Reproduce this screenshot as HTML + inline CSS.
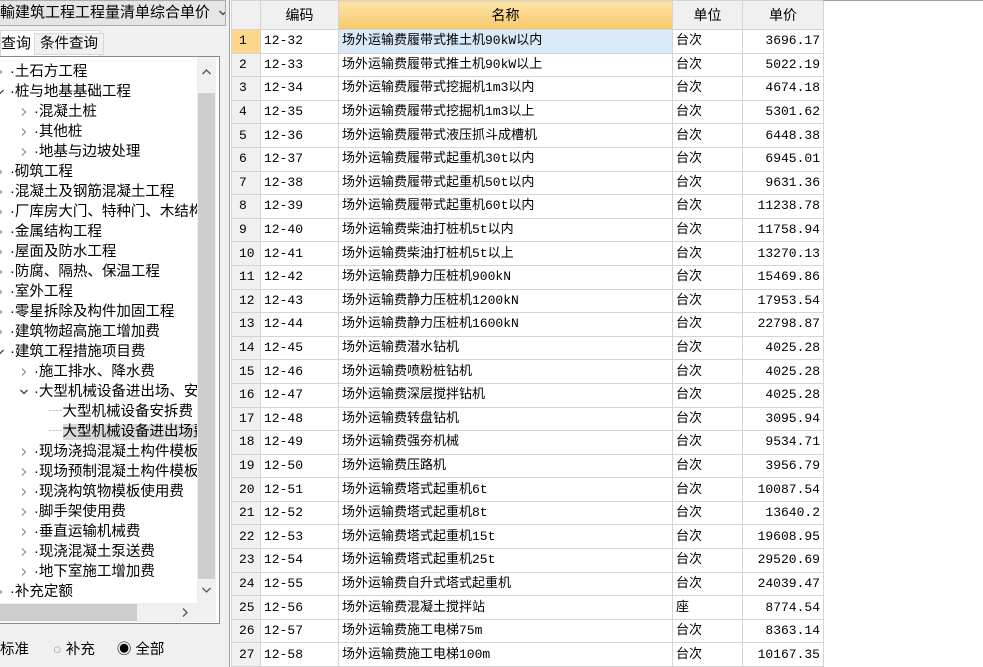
<!DOCTYPE html>
<html><head><meta charset="utf-8"><style>
*{margin:0;padding:0;box-sizing:border-box}
body{width:983px;height:667px;background:#f0f0f0;position:relative;overflow:hidden;font-family:"Liberation Sans","Noto Sans CJK SC",sans-serif;color:#000}
.abs{position:absolute}
#combo{left:0;top:0;width:226px;height:26px;background:#e5e5e5;border:1px solid #adadad;border-left:none;font-size:15px;line-height:24px;white-space:nowrap;overflow:hidden}
#tree{left:0;top:56px;width:220px;height:568px;background:#fff;border:1px solid #828790;border-left:none}
.ti{position:absolute;font-size:14.5px;line-height:20px;white-space:nowrap;height:20px}
.ar{display:inline-block;width:14px;height:20px;vertical-align:top}
.ar svg{margin-top:6px}
#grid{left:229px;top:0;width:754px;height:667px;background:#fff;border-left:1px solid #a0a0a0}
table{border-collapse:collapse;table-layout:fixed;font-family:"Liberation Mono","Noto Sans CJK SC",monospace;font-size:13px;position:absolute;left:1px;top:0}
tr{height:23.6px}
td{border:1px solid #d4d4d4;height:23.6px;line-height:16px;padding:0 3px;white-space:nowrap;overflow:hidden}
th{height:29px;font-weight:normal;background:#f0f0f0;border:1px solid #d4d4d4;font-family:"Liberation Sans","Noto Sans CJK SC",sans-serif;font-size:14px}
td.n{background:#f0f0f0;padding-left:7px}
td.r{text-align:right}
</style></head><body>
<svg width="0" height="0" style="position:absolute"><defs>
<symbol id="cr" viewBox="0 0 8 8"><path d="M2 0.5 L5.5 4 L2 7.5" fill="none" stroke="#999" stroke-width="1.3"/></symbol>
<symbol id="cd" viewBox="0 0 8 8"><path d="M0.5 2 L4 5.5 L7.5 2" fill="none" stroke="#444" stroke-width="1.3"/></symbol>
</defs></svg>
<div id="combo" class="abs">輸建筑工程工程量清单综合单价 <svg width="10" height="8" style="margin-left:4px"><use href="#cd"/></svg></div>
<div class="abs" style="left:0;top:30px;width:100px;height:27px;background:#fff;border:1px solid #d9d9d9;border-bottom:none;font-size:15px;line-height:26px">查询</div>
<div class="abs" style="left:34px;top:33px;width:70px;height:22px;background:#f0f0f0;border:1px solid #d9d9d9;font-size:14.5px;line-height:20px;padding-left:5px">条件查询</div>
<div id="tree" class="abs">
<div style="position:absolute;left:0;top:0;width:197px;height:546px;overflow:hidden">
<div class="ti" style="left:-4px;top:5px"><span class="ar"><svg width="8" height="8"><use href="#cr"/></svg></span>·土石方工程</div>
<div class="ti" style="left:-4px;top:25px"><span class="ar"><svg width="8" height="8"><use href="#cd"/></svg></span>·桩与地基基础工程</div>
<div class="ti" style="left:20px;top:45px"><span class="ar"><svg width="8" height="8"><use href="#cr"/></svg></span>·混凝土桩</div>
<div class="ti" style="left:20px;top:65px"><span class="ar"><svg width="8" height="8"><use href="#cr"/></svg></span>·其他桩</div>
<div class="ti" style="left:20px;top:85px"><span class="ar"><svg width="8" height="8"><use href="#cr"/></svg></span>·地基与边坡处理</div>
<div class="ti" style="left:-4px;top:105px"><span class="ar"><svg width="8" height="8"><use href="#cr"/></svg></span>·砌筑工程</div>
<div class="ti" style="left:-4px;top:125px"><span class="ar"><svg width="8" height="8"><use href="#cr"/></svg></span>·混凝土及钢筋混凝土工程</div>
<div class="ti" style="left:-4px;top:145px"><span class="ar"><svg width="8" height="8"><use href="#cr"/></svg></span>·厂库房大门、特种门、木结构工程</div>
<div class="ti" style="left:-4px;top:165px"><span class="ar"><svg width="8" height="8"><use href="#cr"/></svg></span>·金属结构工程</div>
<div class="ti" style="left:-4px;top:185px"><span class="ar"><svg width="8" height="8"><use href="#cr"/></svg></span>·屋面及防水工程</div>
<div class="ti" style="left:-4px;top:205px"><span class="ar"><svg width="8" height="8"><use href="#cr"/></svg></span>·防腐、隔热、保温工程</div>
<div class="ti" style="left:-4px;top:225px"><span class="ar"><svg width="8" height="8"><use href="#cr"/></svg></span>·室外工程</div>
<div class="ti" style="left:-4px;top:245px"><span class="ar"><svg width="8" height="8"><use href="#cr"/></svg></span>·零星拆除及构件加固工程</div>
<div class="ti" style="left:-4px;top:265px"><span class="ar"><svg width="8" height="8"><use href="#cr"/></svg></span>·建筑物超高施工增加费</div>
<div class="ti" style="left:-4px;top:285px"><span class="ar"><svg width="8" height="8"><use href="#cd"/></svg></span>·建筑工程措施项目费</div>
<div class="ti" style="left:20px;top:305px"><span class="ar"><svg width="8" height="8"><use href="#cr"/></svg></span>·施工排水、降水费</div>
<div class="ti" style="left:20px;top:325px"><span class="ar"><svg width="8" height="8"><use href="#cd"/></svg></span>·大型机械设备进出场、安拆费</div>
<div class="ti" style="left:48px;top:345px"><span style="color:#aaa">┈</span>大型机械设备安拆费</div>
<div class="ti" style="left:48px;top:365px"><span style="color:#aaa">┈</span><span style="background:#d9d9d9">大型机械设备进出场费</span></div>
<div class="ti" style="left:20px;top:385px"><span class="ar"><svg width="8" height="8"><use href="#cr"/></svg></span>·现场浇捣混凝土构件模板使用费</div>
<div class="ti" style="left:20px;top:405px"><span class="ar"><svg width="8" height="8"><use href="#cr"/></svg></span>·现场预制混凝土构件模板使用费</div>
<div class="ti" style="left:20px;top:425px"><span class="ar"><svg width="8" height="8"><use href="#cr"/></svg></span>·现浇构筑物模板使用费</div>
<div class="ti" style="left:20px;top:445px"><span class="ar"><svg width="8" height="8"><use href="#cr"/></svg></span>·脚手架使用费</div>
<div class="ti" style="left:20px;top:465px"><span class="ar"><svg width="8" height="8"><use href="#cr"/></svg></span>·垂直运输机械费</div>
<div class="ti" style="left:20px;top:485px"><span class="ar"><svg width="8" height="8"><use href="#cr"/></svg></span>·现浇混凝土泵送费</div>
<div class="ti" style="left:20px;top:505px"><span class="ar"><svg width="8" height="8"><use href="#cr"/></svg></span>·地下室施工增加费</div>
<div class="ti" style="left:-4px;top:525px"><span class="ar"><svg width="8" height="8"><use href="#cr"/></svg></span>·补充定额</div>
</div>
<div class="abs" style="left:197px;top:0;width:19px;height:546px;background:#f0f0f0">
<div class="abs" style="left:1px;top:36px;width:17px;height:486px;background:#cdcdcd"></div>
<svg class="abs" style="left:5px;top:12px" width="9" height="6"><path d="M0.5 5 L4.5 1 L8.5 5" fill="none" stroke="#555" stroke-width="1.3"/></svg>
<svg class="abs" style="left:5px;top:530px" width="9" height="6"><path d="M0.5 1 L4.5 5 L8.5 1" fill="none" stroke="#555" stroke-width="1.3"/></svg>
</div>
<div class="abs" style="left:0;top:546px;width:216px;height:19px;background:#f0f0f0">
<div class="abs" style="left:0;top:1px;width:137px;height:17px;background:#cdcdcd"></div>
<svg class="abs" style="left:182px;top:5px" width="6" height="9"><path d="M1 0.5 L5 4.5 L1 8.5" fill="none" stroke="#555" stroke-width="1.3"/></svg>
</div>
</div>
<div class="abs" style="left:0;top:638px;font-size:14.5px;white-space:nowrap">标准 <span style="margin-left:20px;color:#999">○</span> 补充 <span style="margin-left:18px">◉</span> 全部</div>
<div id="grid" class="abs">
<table>
<colgroup><col style="width:29px"><col style="width:78px"><col style="width:334px"><col style="width:70px"><col style="width:81px"></colgroup>
<tr style="height:29px"><th></th><th>编码</th><th style="background:linear-gradient(#fde4a8,#f7c86a)">名称</th><th>单位</th><th>单价</th></tr>
<tr><td class="n" style="background:#fcd68a">1</td><td>12-32</td><td style="background:#d9e9f7">场外运输费履带式推土机90kW以内</td><td>台次</td><td class="r">3696.17</td></tr>
<tr><td class="n">2</td><td>12-33</td><td>场外运输费履带式推土机90kW以上</td><td>台次</td><td class="r">5022.19</td></tr>
<tr><td class="n">3</td><td>12-34</td><td>场外运输费履带式挖掘机1m3以内</td><td>台次</td><td class="r">4674.18</td></tr>
<tr><td class="n">4</td><td>12-35</td><td>场外运输费履带式挖掘机1m3以上</td><td>台次</td><td class="r">5301.62</td></tr>
<tr><td class="n">5</td><td>12-36</td><td>场外运输费履带式液压抓斗成槽机</td><td>台次</td><td class="r">6448.38</td></tr>
<tr><td class="n">6</td><td>12-37</td><td>场外运输费履带式起重机30t以内</td><td>台次</td><td class="r">6945.01</td></tr>
<tr><td class="n">7</td><td>12-38</td><td>场外运输费履带式起重机50t以内</td><td>台次</td><td class="r">9631.36</td></tr>
<tr><td class="n">8</td><td>12-39</td><td>场外运输费履带式起重机60t以内</td><td>台次</td><td class="r">11238.78</td></tr>
<tr><td class="n">9</td><td>12-40</td><td>场外运输费柴油打桩机5t以内</td><td>台次</td><td class="r">11758.94</td></tr>
<tr><td class="n">10</td><td>12-41</td><td>场外运输费柴油打桩机5t以上</td><td>台次</td><td class="r">13270.13</td></tr>
<tr><td class="n">11</td><td>12-42</td><td>场外运输费静力压桩机900kN</td><td>台次</td><td class="r">15469.86</td></tr>
<tr><td class="n">12</td><td>12-43</td><td>场外运输费静力压桩机1200kN</td><td>台次</td><td class="r">17953.54</td></tr>
<tr><td class="n">13</td><td>12-44</td><td>场外运输费静力压桩机1600kN</td><td>台次</td><td class="r">22798.87</td></tr>
<tr><td class="n">14</td><td>12-45</td><td>场外运输费潜水钻机</td><td>台次</td><td class="r">4025.28</td></tr>
<tr><td class="n">15</td><td>12-46</td><td>场外运输费喷粉桩钻机</td><td>台次</td><td class="r">4025.28</td></tr>
<tr><td class="n">16</td><td>12-47</td><td>场外运输费深层搅拌钻机</td><td>台次</td><td class="r">4025.28</td></tr>
<tr><td class="n">17</td><td>12-48</td><td>场外运输费转盘钻机</td><td>台次</td><td class="r">3095.94</td></tr>
<tr><td class="n">18</td><td>12-49</td><td>场外运输费强夯机械</td><td>台次</td><td class="r">9534.71</td></tr>
<tr><td class="n">19</td><td>12-50</td><td>场外运输费压路机</td><td>台次</td><td class="r">3956.79</td></tr>
<tr><td class="n">20</td><td>12-51</td><td>场外运输费塔式起重机6t</td><td>台次</td><td class="r">10087.54</td></tr>
<tr><td class="n">21</td><td>12-52</td><td>场外运输费塔式起重机8t</td><td>台次</td><td class="r">13640.2</td></tr>
<tr><td class="n">22</td><td>12-53</td><td>场外运输费塔式起重机15t</td><td>台次</td><td class="r">19608.95</td></tr>
<tr><td class="n">23</td><td>12-54</td><td>场外运输费塔式起重机25t</td><td>台次</td><td class="r">29520.69</td></tr>
<tr><td class="n">24</td><td>12-55</td><td>场外运输费自升式塔式起重机</td><td>台次</td><td class="r">24039.47</td></tr>
<tr><td class="n">25</td><td>12-56</td><td>场外运输费混凝土搅拌站</td><td>座</td><td class="r">8774.54</td></tr>
<tr><td class="n">26</td><td>12-57</td><td>场外运输费施工电梯75m</td><td>台次</td><td class="r">8363.14</td></tr>
<tr><td class="n">27</td><td>12-58</td><td>场外运输费施工电梯100m</td><td>台次</td><td class="r">10167.35</td></tr>
</table>
<div class="abs" style="left:593px;top:0;width:161px;height:1px;background:#a0a0a0"></div>
</div>
</body></html>
